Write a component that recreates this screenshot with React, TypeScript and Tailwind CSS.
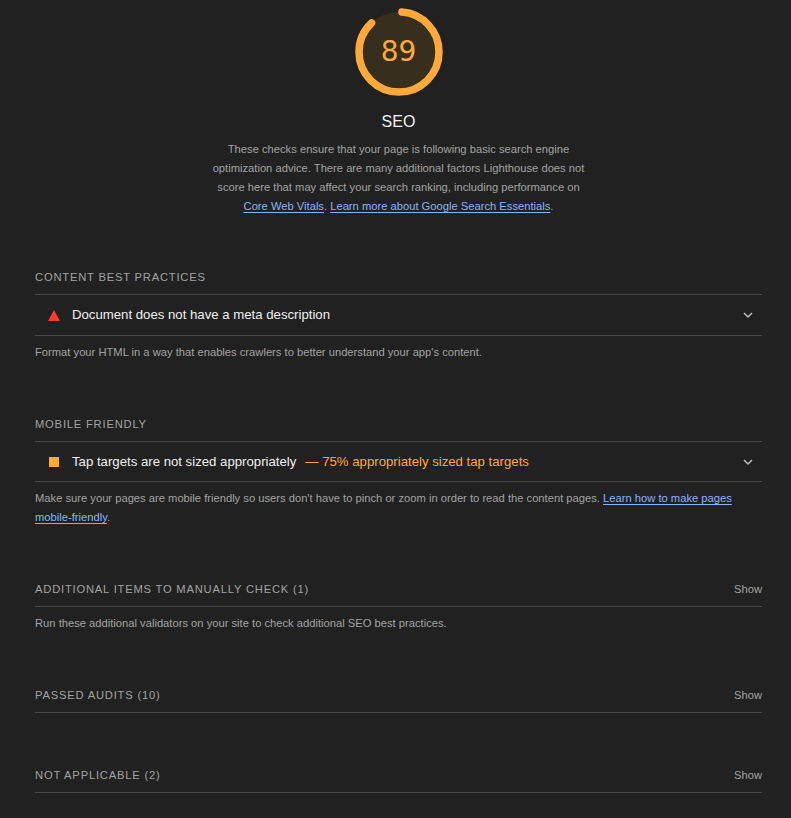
import React from 'react';

const ORANGE = '#ffa93a';

const Gauge = ({ score }: { score: number }) => {
  const r = 40;
  const c = 2 * Math.PI * r;
  return (
    <div className="relative w-[96px] h-[96px]">
      <svg width="96" height="96" viewBox="0 0 96 96" className="-rotate-90">
        <circle cx="48" cy="48" r={r} fill="#372e1e" />
        <circle
          cx="48"
          cy="48"
          r={r}
          fill="none"
          stroke={ORANGE}
          strokeWidth="7.5"
          strokeLinecap="round"
          strokeDasharray={`${(score / 100) * c - 6} ${c}`}
          strokeDashoffset={-3}
        />
      </svg>
      <div className="absolute inset-0 flex items-center justify-center text-[28px] text-[#ffa93a] font-['DejaVu_Sans',sans-serif]">
        {score}
      </div>
    </div>
  );
};

const Chevron = () => (
  <svg width="12" height="12" viewBox="0 0 12 12" fill="none">
    <path d="M2 4 L6 8 L10 4" stroke="#bdbdbd" strokeWidth="1.5" />
  </svg>
);

const GroupHeader = ({ title, show }: { title: string; show?: boolean }) => (
  <div className="flex items-center justify-between border-b border-[#474747] pb-[9px] leading-4">
    <span className="text-[11.2px] tracking-[0.8px] text-[#a3a3a3]">{title}</span>
    {show && <span className="text-[11.2px] text-[#a3a3a3]">Show</span>}
  </div>
);

const AuditRow = ({
  icon,
  title,
  extra,
  tall,
}: {
  icon: React.ReactNode;
  title: string;
  extra?: string;
  tall?: boolean;
}) => (
  <div className={`flex items-center border-b border-[#474747] pl-[13px] pr-[8px] ${tall ? 'h-[41px]' : 'h-[40px]'}`}>
    <div className="w-[12px] flex justify-center">{icon}</div>
    <span className="ml-[12px] text-[13.2px] text-[#f0f0f0]">{title}</span>
    {extra && <span className="ml-[9px] text-[13.2px] text-[#ffa93a]">— {extra}</span>}
    <div className="ml-auto">
      <Chevron />
    </div>
  </div>
);

const Link = ({ children }: { children: React.ReactNode }) => (
  <a className="text-[#8ab4f8] underline underline-offset-2">{children}</a>
);

export default function App() {
  return (
    <div className="min-h-[818px] bg-[#212121] pl-[35px] pr-[29px] pb-10 font-['Liberation_Sans',Arial,sans-serif]">
      <div className="flex flex-col items-center pt-[4px]">
        <Gauge score={89} />
        <div className="mt-[12px] text-[16px] leading-5 text-[#f0f0f0]">SEO</div>
        <p className="mt-[8px] w-[382px] text-center text-[11.2px] leading-[19px] text-[#a3a3a3]">
          These checks ensure that your page is following basic search engine optimization advice. There are many
          additional factors Lighthouse does not score here that may affect your search ranking, including performance
          on <Link>Core Web Vitals</Link>. <Link>Learn more about Google Search Essentials</Link>.
        </p>
      </div>

      <section className="mt-[53px]">
        <GroupHeader title="CONTENT BEST PRACTICES" />
        <AuditRow
          tall
          icon={
            <svg width="12" height="11" viewBox="0 0 12 11">
              <polygon points="6,0 12,11 0,11" fill="#ff3b33" />
            </svg>
          }
          title="Document does not have a meta description"
        />
        <p className="mt-[7px] text-[11.2px] leading-[19px] text-[#a3a3a3]">
          Format your HTML in a way that enables crawlers to better understand your app's content.
        </p>
      </section>

      <section className="mt-[54px]">
        <GroupHeader title="MOBILE FRIENDLY" />
        <AuditRow
          icon={<div className="w-[10px] h-[10px] bg-[#ffa93a]" />}
          title="Tap targets are not sized appropriately"
          extra="75% appropriately sized tap targets"
        />
        <p className="mt-[7px] text-[11.2px] leading-[19px] text-[#a3a3a3]">
          Make sure your pages are mobile friendly so users don't have to pinch or zoom in order to read the content
          pages. <Link>Learn how to make pages <span className="whitespace-nowrap">mobile-friendly</span></Link>.
        </p>
      </section>

      <section className="mt-[54px]">
        <GroupHeader title="ADDITIONAL ITEMS TO MANUALLY CHECK (1)" show />
        <p className="mt-[7px] text-[11.2px] leading-[19px] text-[#a3a3a3]">
          Run these additional validators on your site to check additional SEO best practices.
        </p>
      </section>

      <section className="mt-[54px]">
        <GroupHeader title="PASSED AUDITS (10)" show />
      </section>

      <section className="mt-[54px]">
        <GroupHeader title="NOT APPLICABLE (2)" show />
      </section>
    </div>
  );
}
